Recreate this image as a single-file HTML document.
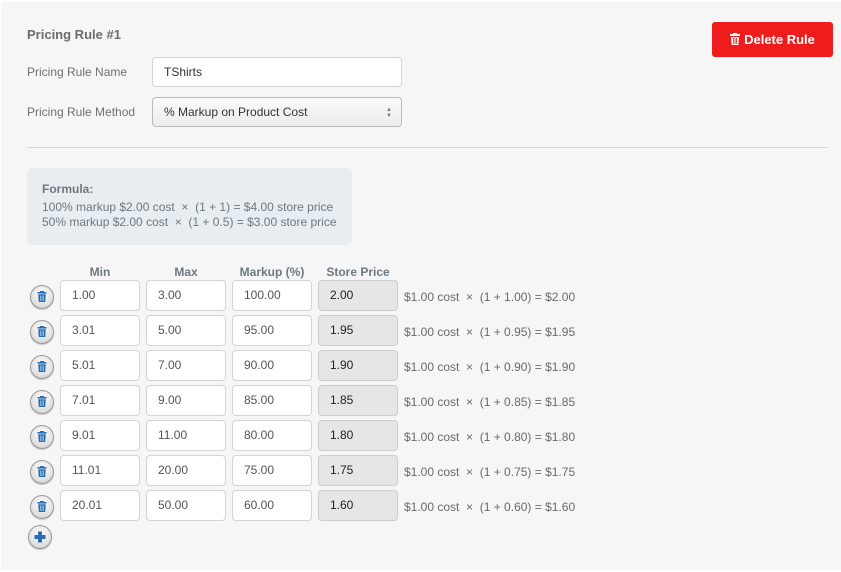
<!DOCTYPE html>
<html><head><style>
*{box-sizing:border-box;margin:0;padding:0}
body{width:841px;height:572px;background:#fff;font-family:"Liberation Sans",Arial,sans-serif;position:relative;overflow:hidden;color:#666}
#bg{position:absolute;left:1px;top:2px;width:840px;height:568px;background:#f6f6f6}
.a{position:absolute}
.lbl{font-size:12px;color:#707070}
.inp{position:absolute;height:31px;background:#fff;border:1px solid #d4d4d4;border-radius:4px;font-size:12px;color:#555;padding:0 0 0 11px;line-height:29px;width:80px}
.ro{background:#e6e6e6;color:#222;border-color:#ccc}
.hd{position:absolute;top:265px;font-size:12px;font-weight:bold;color:#6f7780;width:80px;text-align:center}
.btn{position:absolute;width:24px;height:24px;border-radius:50%;background:radial-gradient(circle at 50% 35%,#fff,#ddd 70%,#bbb);border:1px solid #999;box-shadow:0 1px 1px rgba(0,0,0,.2)}
.res{position:absolute;left:404px;font-size:12px;color:#6a6a6a}
</style></head><body>
<div id="bg"></div>
<div class="a" style="left:27px;top:27px;font-size:13px;font-weight:bold;color:#6c6c6c">Pricing Rule #1</div>
<div class="a" style="left:712px;top:22px;width:121px;height:35px;background:#ee1c1c;border-radius:3px;color:#fff;font-weight:bold;font-size:13px;line-height:35px;text-align:center">
<svg width="10" height="12" viewBox="0 0 10 12" style="vertical-align:-1px;margin-right:4px"><rect x="0" y="1" width="10" height="2" fill="#fff"/><rect x="3" y="0" width="4" height="2" fill="#fff"/><path d="M1 4h8l-0.6 8H1.6z" fill="#fff"/><path d="M3.5 5v6M5 5v6M6.5 5v6" stroke="#ee1c1c" stroke-width=".8"/></svg>Delete Rule</div>
<div class="a lbl" style="left:27px;top:65px">Pricing Rule Name</div>
<div class="inp" style="left:152px;top:57px;width:250px;height:30px;color:#333;padding-left:11px">TShirts</div>
<div class="a lbl" style="left:27px;top:105px">Pricing Rule Method</div>
<div class="inp" style="left:152px;top:97px;width:250px;height:30px;color:#333;background:linear-gradient(#fafafa,#ececec);border-color:#bbb">% Markup on Product Cost</div>
<div class="a" style="left:386px;top:107px;font-size:6px;line-height:6px;color:#777">▲<br>▼</div>
<div class="a" style="left:27px;top:147px;width:801px;height:1px;background:#d4d4d4"></div>
<div class="a" style="left:27px;top:168px;width:325px;height:77px;background:#e7edf0;border-radius:5px;padding:14px 0 0 15px;font-size:12px;color:#6e7880;line-height:15px">
<b style="color:#6f7780;display:block;margin-bottom:3px">Formula:</b>100% markup $2.00 cost &nbsp;×&nbsp; (1 + 1) = $4.00 store price<br>50% markup $2.00 cost &nbsp;×&nbsp; (1 + 0.5) = $3.00 store price</div>
<div class="hd" style="left:60px">Min</div>
<div class="hd" style="left:146px">Max</div>
<div class="hd" style="left:232px">Markup (%)</div>
<div class="hd" style="left:318px">Store Price</div>
<div id="rows"></div>
<div class="btn" style="left:28px;top:525px"><svg width="22" height="22" viewBox="0 0 22 22"><path d="M9 5.5h4v3.5h3.5v4H13v3.5H9V13H5.5V9H9z" fill="#2a6db0"/></svg></div>
<script>
var d=[["1.00","3.00","100.00","2.00"],["3.01","5.00","95.00","1.95"],["5.01","7.00","90.00","1.90"],["7.01","9.00","85.00","1.85"],["9.01","11.00","80.00","1.80"],["11.01","20.00","75.00","1.75"],["20.01","50.00","60.00","1.60"]];
var h="";
d.forEach(function(r,i){var y=280+i*35;
h+='<div class="btn" style="left:30px;top:'+(y+5)+'px"><svg width="22" height="22" viewBox="0 0 22 22"><rect x="6.5" y="6" width="9" height="1.6" fill="#2a6db0"/><rect x="9" y="5" width="4" height="1.5" fill="#2a6db0"/><path d="M7.2 8.3h7.6l-.6 7.7H7.8z" fill="#2a6db0"/><path d="M9.5 9.5v5.5M11 9.5v5.5M12.5 9.5v5.5" stroke="#cfe0f0" stroke-width=".6"/></svg></div>';
h+='<div class="inp" style="left:60px;top:'+y+'px">'+r[0]+'</div>';
h+='<div class="inp" style="left:146px;top:'+y+'px">'+r[1]+'</div>';
h+='<div class="inp" style="left:232px;top:'+y+'px">'+r[2]+'</div>';
h+='<div class="inp ro" style="left:318px;top:'+y+'px">'+r[3]+'</div>';
var m=(r[2]/100).toFixed(2);
h+='<div class="res" style="top:'+(y+10)+'px">$1.00 cost &nbsp;×&nbsp; (1 + '+m+') = $'+r[3]+'</div>';});
document.getElementById("rows").innerHTML=h;
</script>
</body></html>
